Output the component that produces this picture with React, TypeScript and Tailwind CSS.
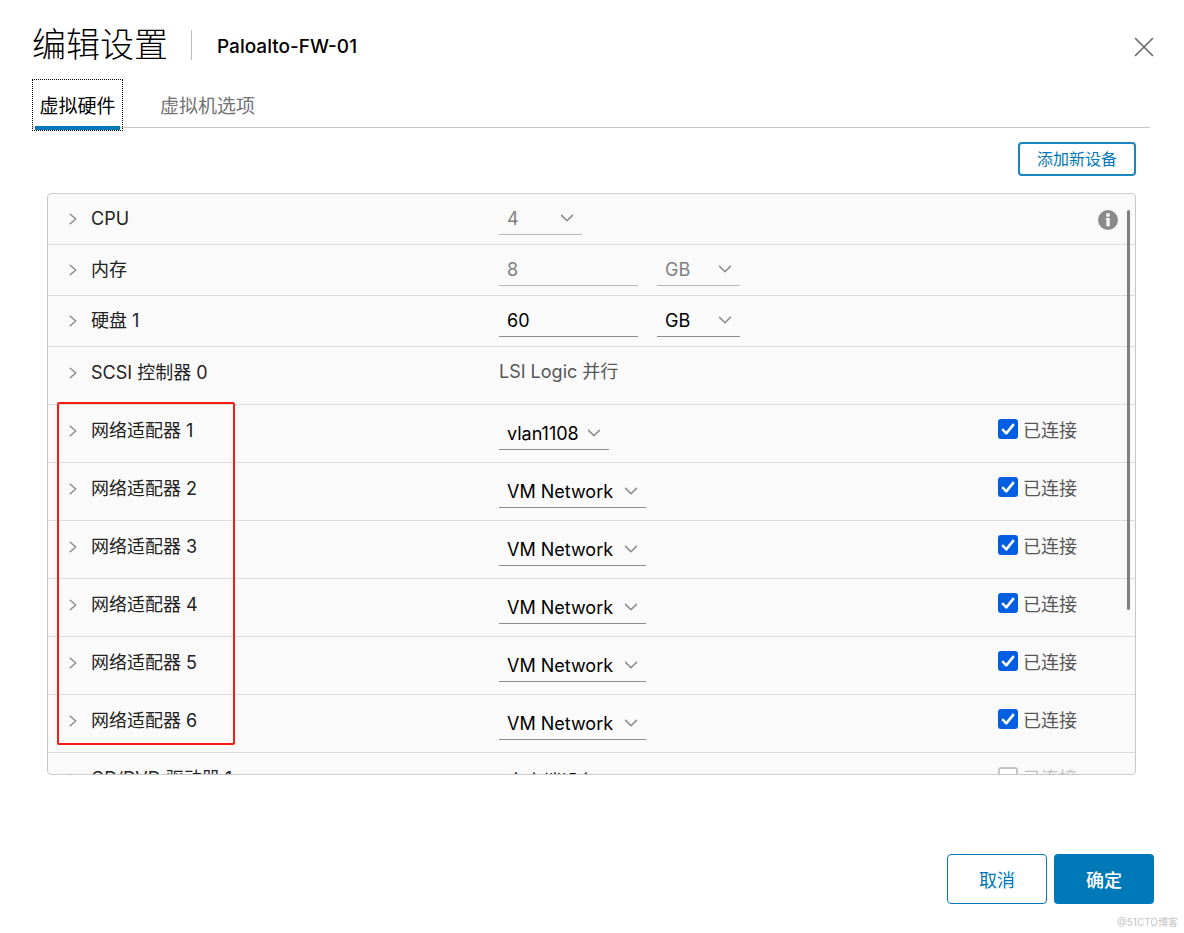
import { useState, type ReactNode } from "react";

function ChevronRight() {
  return (
    <svg width="8" height="12" viewBox="0 0 8 12" fill="none" stroke="#8c8c8c" strokeWidth="1.5" strokeLinecap="round" strokeLinejoin="round" aria-hidden="true">
      <path d="M1.2 1.2 6.8 6 1.2 10.8" />
    </svg>
  );
}

function ChevronDown() {
  return (
    <svg className="pointer-events-none absolute top-[13px] right-2" width="14" height="9" viewBox="0 0 14 9" fill="none" stroke="#8c8c8c" strokeWidth="1.5" strokeLinecap="round" strokeLinejoin="round" aria-hidden="true">
      <path d="M1.6 1.4 7 6.8l5.4-5.4" />
    </svg>
  );
}

type SelectProps = { label: string; value: string; options: string[]; width: string; disabled?: boolean };

function Select({ label, value, options, width, disabled }: SelectProps) {
  return (
    <span className={`relative block ${width}`}>
      <select
        aria-label={label}
        defaultValue={value}
        disabled={disabled}
        className="block h-[34px] w-full appearance-none border-b border-[#8c8c8c] bg-transparent pt-0.5 pl-2 text-lg text-black outline-none disabled:border-[#b8b8b8] disabled:text-[#808080] disabled:opacity-100"
      >
        {options.map((o) => (
          <option key={o}>{o}</option>
        ))}
      </select>
      <ChevronDown />
    </span>
  );
}

function NumberField({ label, value, disabled }: { label: string; value: string; disabled?: boolean }) {
  return (
    <input
      type="text"
      aria-label={label}
      defaultValue={value}
      disabled={disabled}
      className="h-[34px] w-[139px] border-b border-[#8c8c8c] bg-transparent pt-0.5 pl-2 text-lg text-black outline-none disabled:border-[#b8b8b8] disabled:text-[#808080]"
    />
  );
}

function Connected({ id, checked, disabled }: { id: string; checked: boolean; disabled?: boolean }) {
  const [on, setOn] = useState(checked);
  return (
    <span className="flex items-start gap-[5px]">
      <span className="relative block size-5">
        <input
          id={id}
          type="checkbox"
          checked={on}
          disabled={disabled}
          onChange={(e) => setOn(e.target.checked)}
          className="block size-5 appearance-none rounded-[3px] border-2 border-[#767676] bg-white checked:border-[#005fe0] checked:bg-[#005fe0] disabled:border-[#c4c4cc]"
        />
        {on && (
          <svg className="pointer-events-none absolute inset-0" width="20" height="20" viewBox="0 0 20 20" fill="none" stroke="#fff" strokeWidth="2.6" strokeLinejoin="round" aria-hidden="true">
            <path d="M4.2 10.2 8.3 14.3 15.8 5.2" />
          </svg>
        )}
      </span>
      <label htmlFor={id} className={disabled ? "text-[#c4c4c4]" : "text-[#565656]"}>
        已连接
      </label>
    </span>
  );
}

type RowProps = { name: string; tall?: boolean; children?: ReactNode; extra?: ReactNode };

function Row({ name, tall, children, extra }: RowProps) {
  return (
    <div
      className={`grid grid-cols-[451fr_499fr_137fr] items-start border-b border-[#dcdcdc] leading-6 ${tall ? "h-[58px]" : "h-[51px]"}`}
    >
      <button
        type="button"
        aria-expanded="false"
        className={`flex items-center gap-[14px] pl-[21px] text-left ${tall ? "pt-[14px]" : "pt-[13px]"}`}
      >
        <ChevronRight />
        <span className="text-[#222]">{name}</span>
      </button>
      <div className={`flex gap-[19px] ${tall ? "pt-[11px]" : "pt-[7px]"}`}>{children}</div>
      <div className="pt-[14px]">{extra}</div>
    </div>
  );
}

const adapters = [
  { id: 1, network: "vlan1108", width: "w-[110px]" },
  { id: 2, network: "VM Network", width: "w-[147px]" },
  { id: 3, network: "VM Network", width: "w-[147px]" },
  { id: 4, network: "VM Network", width: "w-[147px]" },
  { id: 5, network: "VM Network", width: "w-[147px]" },
  { id: 6, network: "VM Network", width: "w-[147px]" },
];

export default function App() {
  return (
    <main className="min-h-screen bg-white text-lg font-['Inter','Noto_Sans_CJK_SC',sans-serif]">
      <header className="flex items-center pt-[23px] pr-[30px] pl-8">
        <h1 className="text-[34px] leading-[44px] font-light text-black">编辑设置</h1>
        <span className="ml-[23px] h-[30px] w-px bg-[#bdbdbd]" />
        <h2 className="ml-[25px] pt-1 text-[19px] leading-7 font-medium text-black">Paloalto-FW-01</h2>
        <button type="button" aria-label="关闭" className="ml-auto pt-1">
          <svg width="20" height="20" viewBox="0 0 20 20" stroke="#666" strokeWidth="1.6" strokeLinecap="round" aria-hidden="true">
            <path d="M1.5 1.5 18.5 18.5M18.5 1.5 1.5 18.5" />
          </svg>
        </button>
      </header>

      <nav role="tablist" className="mt-3 mr-[34px] ml-8 flex h-[49px] items-start border-b border-[#c6c6c6]">
        <button
          type="button"
          role="tab"
          aria-selected="true"
          className="h-[52px] w-[91px] shrink-0 border border-dotted border-black px-0.5 text-[19px] text-black"
        >
          <span className="flex h-[49px] items-center justify-center border-b-4 border-[#0079b8] pt-2 whitespace-nowrap">虚拟硬件</span>
        </button>
        <button type="button" role="tab" aria-selected="false" className="ml-[37px] h-[52px] pt-1 text-[19px] text-[#737373]">
          虚拟机选项
        </button>
      </nav>

      <section className="pr-12 pl-[47px]">
        <div className="flex justify-end pt-[14px] pb-[17px]">
          <button type="button" className="h-[34px] rounded-[4px] border-2 border-[#1a86bf] px-[17px] text-base text-[#0079b8]">
            添加新设备
          </button>
        </div>

        <div className="relative overflow-hidden rounded-[4px] border border-[#c8c8c8] bg-[#fafafa]">
          <div className="h-[580px] overflow-hidden">
            <Row
              name="CPU"
              extra={
                <button type="button" aria-label="信息" className="ml-[99px] block">
                  <svg width="22" height="24" viewBox="0 2 22 24" aria-hidden="true">
                    <circle cx="11" cy="14" r="10" fill="#8a8a8a" />
                    <circle cx="11" cy="9" r="2" fill="#fafafa" />
                    <path d="M8.8 12h3.9v8.2H9.4V13.6h-.6z" fill="#fafafa" />
                  </svg>
                </button>
              }
            >
              <Select label="CPU" value="4" options={["1", "2", "4", "8"]} width="w-[83px]" disabled />
            </Row>
            <Row name="内存">
              <NumberField label="内存" value="8" disabled />
              <Select label="内存单位" value="GB" options={["MB", "GB"]} width="w-[83px]" disabled />
            </Row>
            <Row name="硬盘 1">
              <NumberField label="硬盘 1" value="60" />
              <Select label="硬盘单位" value="GB" options={["MB", "GB", "TB"]} width="w-[83px]" />
            </Row>
            <Row name="SCSI 控制器 0" tall>
              <span className="pt-0.5 text-[#565656]">LSI Logic 并行</span>
            </Row>
            <div className="relative">
              {adapters.map((a) => (
                <Row key={a.id} name={`网络适配器 ${a.id}`} tall extra={<Connected id={`adapter-${a.id}`} checked />}>
                  <Select
                    label={`网络适配器 ${a.id}`}
                    value={a.network}
                    options={["vlan1108", "VM Network"]}
                    width={a.width}
                  />
                </Row>
              ))}
              <div className="pointer-events-none absolute -top-[3px] bottom-2 left-[9px] w-[178px] rounded-[2px] border-2 border-[#f91a12]" />
            </div>
            <Row name="CD/DVD 驱动器 1" tall extra={<Connected id="cd" checked={false} disabled />}>
              <Select label="CD/DVD 驱动器 1" value="客户端设备" options={["客户端设备"]} width="w-[132px]" />
            </Row>
          </div>
          <div className="absolute top-4 right-[5px] h-[400px] w-[3px] rounded-full bg-[#7f7f7f]" />
        </div>
      </section>

      <footer className="flex justify-end gap-[7px] pt-[79px] pr-[30px]">
        <button type="button" className="h-[50px] w-[100px] rounded-[4px] border border-[#0079b8] pt-1 text-lg text-[#0079b8]">
          取消
        </button>
        <button type="button" className="h-[50px] w-[100px] rounded-[4px] bg-[#0079b8] pt-1 text-lg font-medium text-white">
          确定
        </button>
      </footer>
      <p className="pt-[10px] pr-[6px] text-right text-[10px] leading-4 text-[#c4c4c4]">@51CTO博客</p>
    </main>
  );
}
